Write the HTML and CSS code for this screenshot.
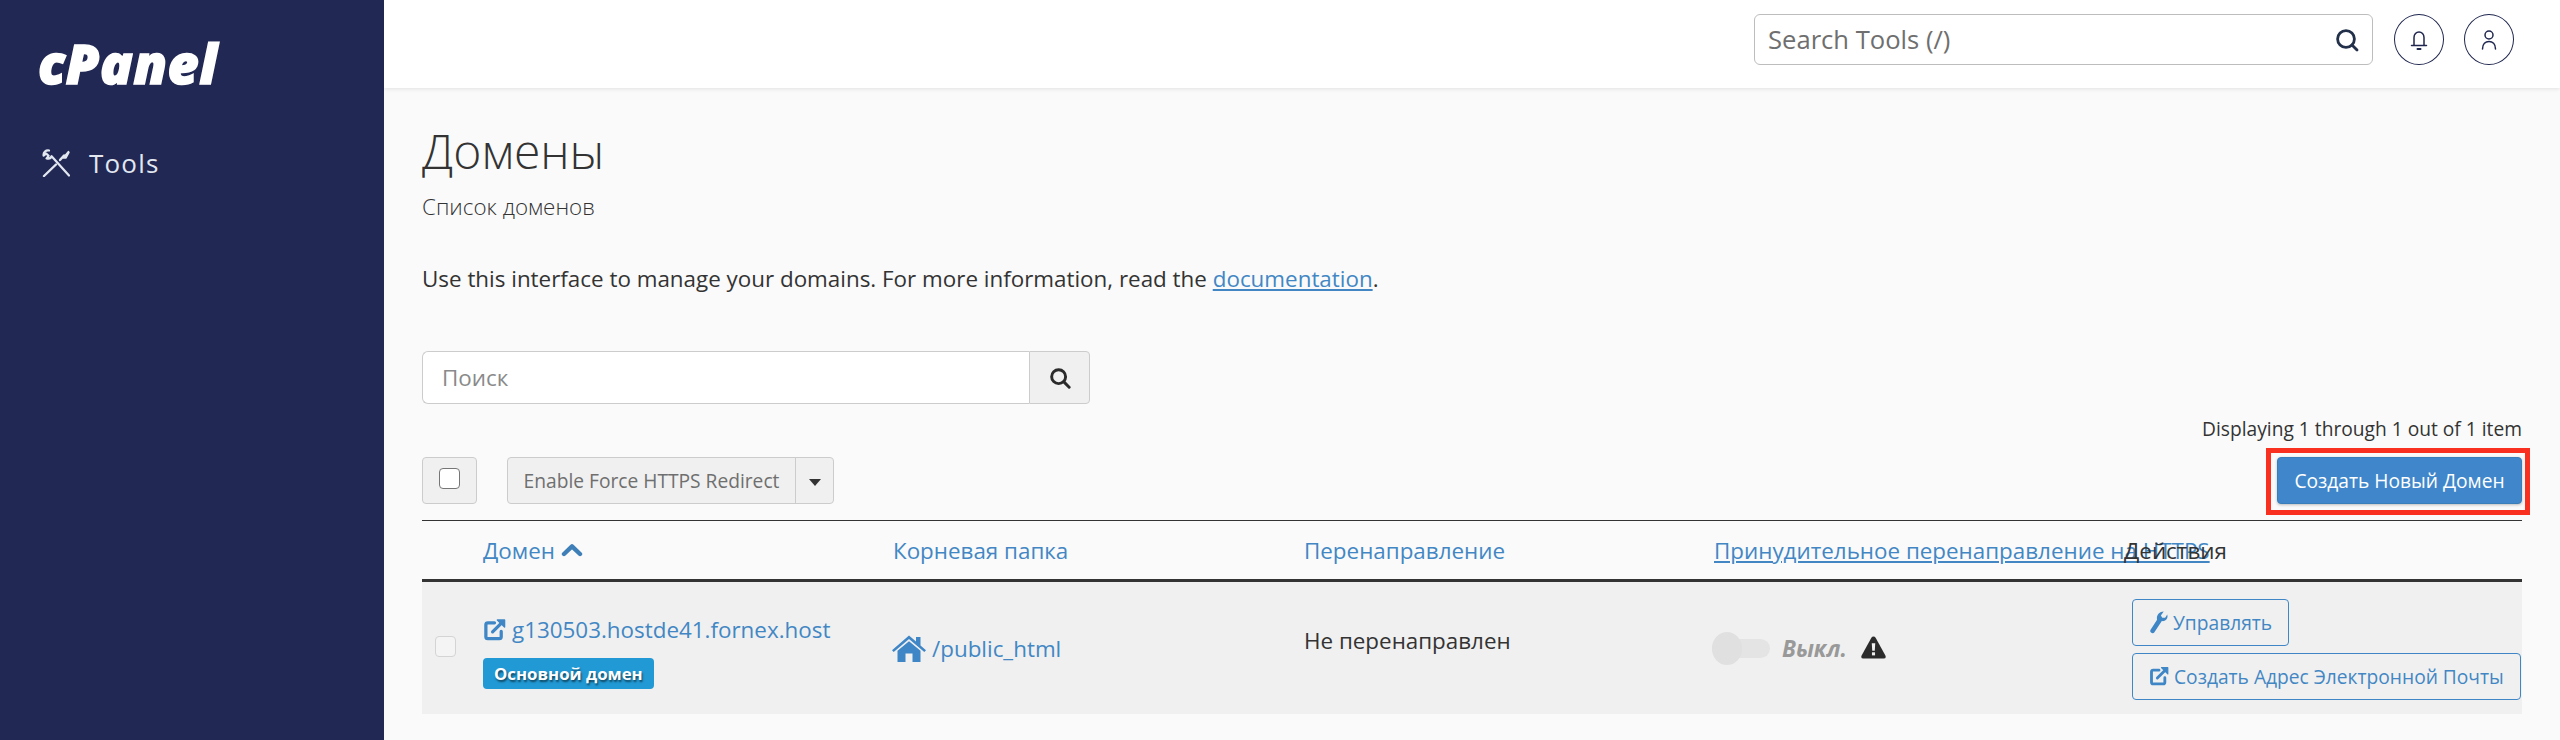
FILE: index.html
```html
<!DOCTYPE html>
<html lang="ru">
<head>
<meta charset="utf-8">
<title>Домены</title>
<link rel="stylesheet" href="styles.css">
</head>
<body>
<div class="app">
  <aside class="sidebar">
    <div class="logo">cPanel</div>
    <nav class="nav-item">
      <svg class="tools-icon" viewBox="0 0 28 28" fill="none" stroke="currentColor" stroke-width="2.4" stroke-linecap="round" stroke-linejoin="round"><path d="M2 27 L14 15.5"/><path d="M18 11 L22 6.500"/><path d="M21 9 L26.500 2.500 L27 3.500 L24 9 Z" fill="currentColor" stroke-width="1.500"/><path d="M7 1.500 C3.800 1 1.200 3.200 1.600 6.600 L4.200 4.600 L6.600 6.800 L4.600 9.400 C7 10 9 9 9.600 7.200 L27 26.500" stroke-width="2.200"/></svg>
      <span>Tools</span>
    </nav>
  </aside>
  <div class="main">
    <header class="topbar">
      <div class="tool-search">
        <span class="tool-placeholder">Search Tools (/)</span>
        <svg class="tool-search-icon" viewBox="0 0 24 24" fill="none" stroke="#22304a" stroke-width="2.8" stroke-linecap="round"><circle cx="11" cy="11" r="8.400"/><path d="M17 17 L22 22"/></svg>
      </div>
      <button class="circle-btn" aria-label="Notifications">
        <svg viewBox="0 0 24 24" fill="none" stroke="#20274f" stroke-width="1.500" stroke-linecap="round" stroke-linejoin="round"><path d="M7 17 V9.500 A5 5.600 0 0 1 17 9.500 V17"/><path d="M4.500 17.500 H19.500"/><path d="M10.500 21 H13.500" stroke-width="2"/></svg>
      </button>
      <button class="circle-btn" aria-label="Account">
        <svg viewBox="0 0 24 24" fill="none" stroke="#20274f" stroke-width="1.500" stroke-linecap="round"><circle cx="12" cy="7" r="4"/><path d="M5.500 21 C5.500 16 8.500 13.500 12 13.500 C15.500 13.500 18.500 16 18.500 21"/></svg>
      </button>
    </header>
    <main class="content">
      <h1 class="title">Домены</h1>
      <p class="subtitle">Список доменов</p>
      <p class="intro">Use this interface to manage your domains. For more information, read the <a href="#">documentation</a>.</p>
      <div class="search-group">
        <div class="search-input">Поиск</div>
        <button class="search-btn" aria-label="Поиск">
          <svg viewBox="0 0 24 24" fill="none" stroke="#2b2b2b" stroke-width="3.200" stroke-linecap="round"><circle cx="10.500" cy="10.500" r="7.600"/><path d="M16.500 16.500 L22 22"/></svg>
        </button>
      </div>
      <div class="display-count">Displaying 1 through 1 out of 1 item</div>
      <div class="toolbar">
        <div class="check-btn"><span class="check-box"></span></div>
        <div class="split">
          <span class="split-main">Enable Force HTTPS Redirect</span>
          <span class="split-caret"><i class="caret"></i></span>
        </div>
        <button class="create-btn">Создать Новый Домен</button>
      </div>
      <div class="table">
        <div class="thead">
          <div></div>
          <div class="th"><a href="#">Домен</a>
            <svg class="sort-icon" viewBox="0 0 22 14" fill="none" stroke="#3f7fb8" stroke-width="4.400" stroke-linecap="round" stroke-linejoin="round"><path d="M3 11 L11 3.400 L19 11"/></svg>
          </div>
          <div class="th"><a href="#">Корневая папка</a></div>
          <div class="th"><a href="#">Перенаправление</a></div>
          <div class="th"><a class="ul" href="#">Принудительное перенаправление на HTTPS</a></div>
          <div class="th th-plain">Действия</div>
        </div>
        <div class="tr">
          <div class="td"><span class="row-check"></span></div>
          <div class="td td-domain">
            <a class="domain-link" href="#">
              <svg class="ext-icon" viewBox="0 0 24 24" fill="none" stroke="#3f86c6" stroke-width="3.400" stroke-linejoin="round" stroke-linecap="round"><path d="M12 5 H5 Q3 5 3 7 V19.500 Q3 21.500 5 21.500 H17 Q19 21.500 19 19.500 V14"/><path d="M10 14.500 L20 4.500"/><path d="M15 2 H22.500 V9.500 Z" fill="#3f86c6" stroke-width="1.500"/></svg>g130503.hostde41.fornex.host</a>
            <span class="badge">Основной домен</span>
          </div>
          <div class="td">
            <a class="root-link" href="#">
              <svg class="home-icon" viewBox="0 0 34 27" fill="#3f86c6"><path d="M17 0.500 L24 6.500 V2 H28.500 V10.400 L34 15.200 L32.300 17 L17 4 L1.700 17 L0 15.200 Z"/><path d="M5.500 15.800 L17 6.200 L28.500 15.800 V27 H20.500 V18.500 H13.500 V27 H5.500 Z"/></svg>/public_html</a>
          </div>
          <div class="td td-redirect">Не перенаправлен</div>
          <div class="td td-force">
            <span class="toggle"><span class="knob"></span></span>
            <em class="off">Выкл.</em>
            <svg class="warn-icon" viewBox="0 0 26 23" fill="#2b2b2b"><path d="M13 0 Q14.400 0 15.200 1.400 L25.500 20 Q26.400 23 23.500 23 H2.500 Q-0.400 23 0.500 20 L10.800 1.400 Q11.600 0 13 0 Z"/><path d="M11.200 7 H14.800 L14.300 15 H11.700 Z" fill="#f0f0f0"/><rect x="11.400" y="16.500" width="3.200" height="3.200" fill="#f0f0f0"/></svg>
          </div>
          <div class="td td-actions">
            <a class="outline-btn" href="#">
              <svg class="wrench-icon" viewBox="0 0 20 24" fill="#3f86c6"><path d="M19.500 5.500 C19.500 9 16.500 11.200 13.500 10.500 L5.500 22.500 C4 24.300 0.500 22.500 1.500 20 L8.500 9 C7.500 5 10.500 0.500 15.500 0.500 L12.500 4.500 L14 7 L17 7 L19.200 3.500 Z"/></svg>Управлять</a>
            <a class="outline-btn" href="#">
              <svg class="ext-icon small" viewBox="0 0 24 24" fill="none" stroke="#3f86c6" stroke-width="3.400" stroke-linejoin="round" stroke-linecap="round"><path d="M12 5 H5 Q3 5 3 7 V19.500 Q3 21.500 5 21.500 H17 Q19 21.500 19 19.500 V14"/><path d="M10 14.500 L20 4.500"/><path d="M15 2 H22.500 V9.500 Z" fill="#3f86c6" stroke-width="1.500"/></svg>Создать Адрес Электронной Почты</a>
          </div>
        </div>
      </div>
    </main>
  </div>
</div>
</body>
</html>
```
FILE: styles.css
```css
* { box-sizing: border-box; }
html, body { margin: 0; height: 740px; overflow: hidden; }
body { font-family: "Open Sans", "Noto Sans", sans-serif; color: #333; background: #fafafa; }
a { color: #4287c4; text-decoration: none; }
button { font-family: inherit; cursor: pointer; }
p, h1 { margin: 0; }

.app { display: flex; height: 740px; }

.sidebar { flex: 0 0 384px; background: #212853; color: #e2e7f0; padding: 31px 0 0 38px; }
.logo { font-family: "Open Sans", sans-serif; font-weight: 800; font-style: italic; font-size: 54px; line-height: 64px; letter-spacing: 0.6px; color: #fff; -webkit-text-stroke: 1.5px #fff; }
.nav-item { display: flex; align-items: center; gap: 19px; margin-top: 50px; margin-left: 4px; font-size: 26px; line-height: 36px; letter-spacing: 1.2px; }
.tools-icon { width: 28px; height: 28px; flex: none; }

.main { flex: 1; min-width: 0; display: flex; flex-direction: column; }
.topbar { height: 88px; flex: none; background: #fff; box-shadow: 0 1px 4px rgba(0,0,0,.1); display: flex; align-items: center; justify-content: flex-end; gap: 20px; padding: 0 46px 9px 0; position: relative; }
.tool-search { width: 619px; height: 51px; margin-right: 1px; border: 1px solid #bdbdbd; border-radius: 6px; display: flex; align-items: center; justify-content: space-between; padding: 0 13px; }
.tool-placeholder { font-size: 25.6px; color: #6f6f6f; }
.tool-search-icon { width: 24px; height: 24px; }
.circle-btn { width: 50px; height: 51px; padding: 0; border: 1.5px solid #20274f; border-radius: 50%; background: #fff; display: flex; align-items: center; justify-content: center; }
.circle-btn svg { width: 24px; height: 26px; }

.content { flex: 1; padding: 37px 38px 0; }
.title { font-size: 48px; line-height: 52px; font-weight: 300; color: #333; }
.subtitle { font-size: 22.4px; line-height: 28px; margin-top: 16px; font-weight: 300; }
.intro { font-size: 22.4px; line-height: 30px; margin-top: 43px; }
.intro a { text-decoration: underline; }

.search-group { display: flex; width: 668px; height: 53px; margin-top: 57px; }
.search-input { flex: 1; background: #fff; border: 1px solid #ccc; border-right: 0; border-radius: 6px 0 0 6px; font-size: 22.4px; color: #8a8a8a; padding: 0 19px; display: flex; align-items: center; }
.search-btn { width: 61px; padding: 0; background: #f0f0f0; border: 1px solid #ccc; border-radius: 0 4px 4px 0; display: flex; align-items: center; justify-content: center; }
.search-btn svg { width: 22px; height: 22px; }

.display-count { font-size: 19.2px; line-height: 24px; margin-top: 13px; text-align: right; }

.toolbar { display: flex; align-items: center; height: 47px; margin-top: 16px; }
.check-btn { width: 55px; height: 47px; background: #f0f0f0; border: 1px solid #ccc; border-radius: 4px; display: flex; align-items: center; justify-content: center; padding-bottom: 4px; }
.check-box { width: 21px; height: 21px; border: 1.5px solid #767676; border-radius: 4px; background: #fff; }
.split { display: flex; margin-left: 30px; height: 47px; color: #6f6f6f; background: #f0f0f0; border: 1px solid #ccc; border-radius: 4px; font-size: 19.2px; }
.split-main { width: 288px; display: flex; align-items: center; justify-content: center; border-right: 1px solid #ccc; }
.split-caret { width: 37px; display: flex; align-items: center; justify-content: center; }
.caret { border-top: 7px solid #333; border-left: 6px solid transparent; border-right: 6px solid transparent; margin-top: 3px; }
.create-btn { position: relative; margin-left: auto; width: 245px; height: 47px; padding: 0; background: #3f87ca; color: #fff; border: 1px solid #3a7eb9; border-radius: 4px; font-size: 19.2px; box-shadow: 0 1px 3px rgba(0,0,0,.25); }
.create-btn::after { content: ""; position: absolute; top: -10px; right: -9px; bottom: -12px; left: -12px; border: 5px solid #f92f20; pointer-events: none; }

.table { margin-top: 16px; border-top: 1.5px solid #333; }
.thead, .tr { display: grid; grid-template-columns: 61px 410px 411px 410px 410px 398px; }
.thead { height: 61px; border-bottom: 3px solid #333; align-items: center; }
.th { font-size: 22.4px; white-space: nowrap; display: flex; align-items: center; gap: 6px; }
.th-plain { color: #333; }
.ul { text-decoration: underline; }
.sort-icon { width: 22px; height: 14px; }

.tr { height: 132px; background: #f0f0f0; align-items: center; }
.td { font-size: 22.4px; }
.row-check { display: block; width: 21px; height: 21px; margin: 0 0 4px 13px; border: 1.5px solid #d4d4d4; border-radius: 4px; background: #f4f4f4; }
.td-domain { display: flex; flex-direction: column; align-items: flex-start; gap: 13px; padding-top: 7px; }
.domain-link { display: flex; align-items: center; gap: 6px; font-size: 22.4px; line-height: 30px; }
.ext-icon { width: 23px; height: 23px; flex: none; }
.ext-icon.small { width: 20px; height: 20px; }
.badge { background: #2199d4; color: #fff; font-size: 16.8px; font-weight: 700; line-height: 31px; padding: 0 11px; border-radius: 4px; text-shadow: 1px 2px 2px rgba(0,0,0,.55); white-space: nowrap; }
.root-link { display: flex; align-items: center; gap: 6px; margin-left: -1px; }
.home-icon { width: 34px; height: 27px; flex: none; }
.td-redirect { padding-bottom: 15px; }
.td-force { display: flex; align-items: center; font-size: 22.4px; margin-left: -2px; }
.toggle { position: relative; width: 58px; height: 19px; background: #e4e4e4; border-radius: 10px; }
.knob { position: absolute; left: 0; top: -7px; width: 30px; height: 33px; background: #e0e0e0; border-radius: 50%; }
.off { margin-left: 12px; font-weight: 700; color: #999; }
.warn-icon { width: 25px; height: 23px; margin-left: 14px; margin-top: -2px; }
.td-actions { display: flex; flex-direction: column; align-items: flex-start; gap: 7px; padding: 2px 0 0 8px; }
.outline-btn { display: flex; align-items: center; gap: 5px; height: 47px; padding: 0 16px; border: 1px solid #3f86c6; border-radius: 4px; font-size: 19.2px; white-space: nowrap; }
.wrench-icon { width: 19px; height: 23px; flex: none; }
```
